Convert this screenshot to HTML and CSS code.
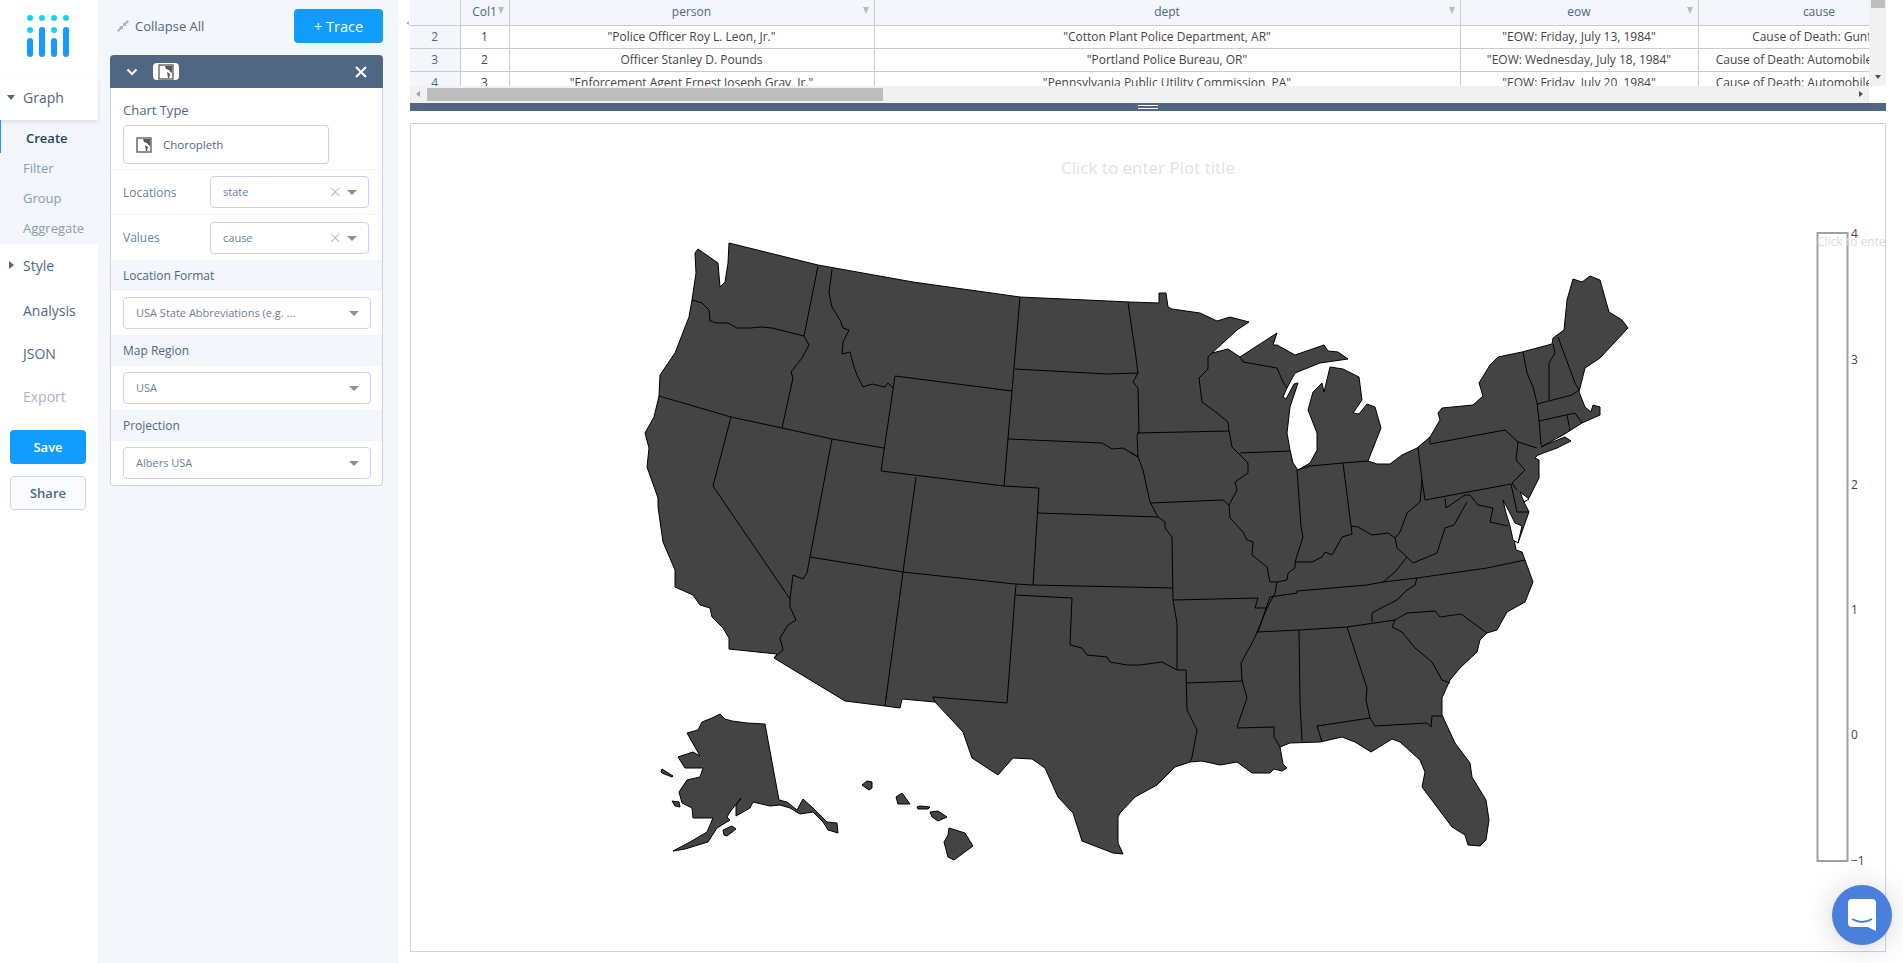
FILE: index.html
```html
<!DOCTYPE html>
<html lang="en">
<head>
  <meta charset="UTF-8">
  <title>Chart Studio</title>
  <link rel="stylesheet" href="styles.css">
</head>
<body>

<nav class="sidenav">
  <div class="logo">
    <svg width="50" height="50" viewBox="0 0 50 50">
      <g fill="#19d3f3">
        <circle cx="3" cy="3" r="3"/><circle cx="15" cy="3" r="3"/><circle cx="27" cy="3" r="3"/><circle cx="39" cy="3" r="3"/>
        <circle cx="3" cy="15" r="3"/><circle cx="27" cy="15" r="3"/>
      </g>
      <g fill="#119dff">
        <rect x="0" y="23" width="6" height="19" rx="3"/><rect x="12" y="12" width="6" height="30" rx="3"/>
        <rect x="24" y="23" width="6" height="19" rx="3"/><rect x="36" y="12" width="6" height="30" rx="3"/>
      </g>
    </svg>
  </div>
  <div class="nav-head"><span class="caret-down"></span>Graph</div>
  <div class="nav-sub">
    <div class="nav-item active">Create</div>
    <div class="nav-item">Filter</div>
    <div class="nav-item">Group</div>
    <div class="nav-item">Aggregate</div>
  </div>
  <div class="nav-head style-head"><span class="caret-right"></span>Style</div>
  <div class="nav-link">Analysis</div>
  <div class="nav-link">JSON</div>
  <div class="nav-link disabled">Export</div>
  <button class="btn-save">Save</button>
  <button class="btn-share">Share</button>
</nav>

<aside class="panel">
  <div class="panel-top">
    <div class="collapse-all">
      <svg width="12" height="12" viewBox="0 0 12 12" fill="#a9b4c4">
        <path d="M0 10.500 L3.500 7 L2 6 L6 6 L6 10 L5 8.500 L1.500 12 Z"/>
        <path d="M12 1.500 L8.500 5 L10 6 L6 6 L6 2 L7 3.500 L10.500 0 Z"/>
      </svg>
      Collapse All
    </div>
    <button class="btn-trace">+ Trace</button>
  </div>

  <div class="card">
    <div class="card-head">
      <svg class="chev" width="12" height="8" viewBox="0 0 12 8"><path d="M1.500 1.500 L6 6 L10.500 1.500" fill="none" stroke="#fff" stroke-width="2"/></svg>
      <span class="trace-icon">
        <svg width="16" height="16" viewBox="0 0 16 16"><use href="#choro"/></svg>
      </span>
      <svg class="close" width="12" height="12" viewBox="0 0 12 12"><path d="M1 1 L11 11 M11 1 L1 11" stroke="#fff" stroke-width="2"/></svg>
    </div>

    <div class="chart-type">
      <div class="field-label">Chart Type</div>
      <div class="type-box">
        <svg width="16" height="16" viewBox="0 0 16 16">
          <symbol id="choro" viewBox="0 0 16 16">
            <rect x="1" y="1" width="14" height="14" fill="#fff" stroke="#6b6b6b" stroke-width="1.500"/>
            <path d="M7 2 H14 V9 L12.500 8 L11 6 L8 5 Z M9 8 L12 10 L11 14 H10 Z" fill="#555"/>
          </symbol>
          <use href="#choro"/>
        </svg>
        Choropleth
      </div>
    </div>

    <div class="row">
      <span class="row-label">Locations</span>
      <div class="select narrow">state<span class="clear">&times;</span><span class="arrow"></span></div>
    </div>
    <div class="row">
      <span class="row-label">Values</span>
      <div class="select narrow">cause<span class="clear">&times;</span><span class="arrow"></span></div>
    </div>

    <div class="section-label">Location Format</div>
    <div class="section-body">
      <div class="select">USA State Abbreviations (e.g. ...<span class="arrow"></span></div>
    </div>
    <div class="section-label">Map Region</div>
    <div class="section-body">
      <div class="select">USA<span class="arrow"></span></div>
    </div>
    <div class="section-label">Projection</div>
    <div class="section-body">
      <div class="select">Albers USA<span class="arrow"></span></div>
    </div>
  </div>
</aside>

<main class="main">
  <span class="panel-toggle"></span>
  <div class="grid-wrap">
    <div class="grid-view">
      <table class="grid">
        <colgroup>
          <col class="c-num"><col class="c-id"><col class="c-person"><col class="c-dept"><col class="c-eow"><col class="c-cause">
        </colgroup>
        <thead>
          <tr>
            <th></th>
            <th>Col1<i class="filter"></i></th>
            <th>person<i class="filter"></i></th>
            <th>dept<i class="filter"></i></th>
            <th>eow<i class="filter"></i></th>
            <th>cause<i class="filter"></i></th>
          </tr>
        </thead>
        <tbody>
          <tr><th>2</th><td>1</td><td>"Police Officer Roy L. Leon, Jr."</td><td>"Cotton Plant Police Department, AR"</td><td>"EOW: Friday, July 13, 1984"</td><td>Cause of Death: Gunfire</td></tr>
          <tr><th>3</th><td>2</td><td>Officer Stanley D. Pounds</td><td>"Portland Police Bureau, OR"</td><td>"EOW: Wednesday, July 18, 1984"</td><td>Cause of Death: Automobile accident</td></tr>
          <tr><th>4</th><td>3</td><td>"Enforcement Agent Ernest Joseph Gray, Jr."</td><td>"Pennsylvania Public Utility Commission, PA"</td><td>"EOW: Friday, July 20, 1984"</td><td>Cause of Death: Automobile accident</td></tr>
        </tbody>
      </table>
    </div>
    <div class="vbar"><span class="vthumb"></span><span class="vdown"></span></div>
    <div class="hbar"><span class="hleft"></span><span class="hthumb"></span><span class="hright"></span></div>
  </div>
  <div class="resizer"><span class="grip"></span></div>

  <div class="plot">
    <svg class="plot-svg" viewBox="410 123 1476 829" width="1476" height="829">
      <text class="plot-title" x="1148" y="174">Click to enter Plot title</text>

      <g class="states">
        <!-- lower 48 silhouette -->
        <path d="M698 249 L695 253 L696 273 L692 300 L689 317 L675 353 L660 375 L659 396 L654 417 L645 433 L649 448 L647 467 L658 498 L658 507 L663 542 L675 570 L675 587 L693 595 L700 605 L710 608 L712 617 L723 628 L729 638 L729 649 L777 654 L774 658 L845 701 L885 706 L900 708 L902 699 L935 702 L950 718 L963 732 L972 758 L998 775 L1013 758 L1032 759 L1045 768 L1058 797 L1073 813 L1082 841 L1113 853 L1123 854 L1118 843 L1118 817 L1120 813 L1135 797 L1157 785 L1175 767 L1190 762 L1202 761 L1220 765 L1237 762 L1252 773 L1270 773 L1274 769 L1282 771 L1287 768 L1283 764 L1280 747 L1290 743 L1320 742 L1342 737 L1355 742 L1371 752 L1392 739 L1400 742 L1420 760 L1425 772 L1422 787 L1452 827 L1465 835 L1468 845 L1480 846 L1486 840 L1489 820 L1486 800 L1472 777 L1470 763 L1455 743 L1442 715 L1442 698 L1450 680 L1460 668 L1477 652 L1480 640 L1487 633 L1497 630 L1507 612 L1525 602 L1533 582 L1525 560 L1522 552 L1516 550 L1512 527 L1518 543 L1525 523 L1529 512 L1524 502 L1529 498 L1539 478 L1539 460 L1535 458 L1538 455 L1557 448 L1571 441 L1565 437 L1550 443 L1541 447 L1563 435 L1582 423 L1600 415 L1600 407 L1593 405 L1591 412 L1585 407 L1579 392 L1585 368 L1600 358 L1628 328 L1622 320 L1609 312 L1600 280 L1590 276 L1582 282 L1573 279 L1567 300 L1564 330 L1553 338 L1552 344 L1522 352 L1498 357 L1490 365 L1479 383 L1483 396 L1473 405 L1442 408 L1438 413 L1440 420 L1430 437 L1417 448 L1402 455 L1390 464 L1377 464 L1368 461 L1381 428 L1375 407 L1367 404 L1359 414 L1353 413 L1362 400 L1359 377 L1343 369 L1330 367 L1324 392 L1322 383 L1313 392 L1308 410 L1317 433 L1317 450 L1310 463 L1298 470 L1293 463 L1290 450 L1287 433 L1290 407 L1298 383 L1294 384 L1286 399 L1283 397 L1287 388 L1295 373 L1320 363 L1348 359 L1338 352 L1328 351 L1324 345 L1295 355 L1277 345 L1273 345 L1277 333 L1240 357 L1228 349 L1212 353 L1237 330 L1249 322 L1230 317 L1217 321 L1200 313 L1172 309 L1168 307 L1166 293 L1159 293 L1159 303 L1130 302 L1020 297 L913 282 L818 265 L729 243 L728 263 L725 282 L720 287 L718 263 Z"/>
        <!-- bays that cut into the coast -->
        <path class="water" d="M1503 500 L1506 513 L1510 526 L1513 540 L1518 543 L1522 526 L1515 523 L1510 513 Z M1520 492 L1529 499 L1524 502 Z"/>
        <!-- Alaska and islands -->
        <path d="M720 714 L725 719 L732 721 L747 723 L765 724 L779 800 L787 802 L797 810 L803 799 L813 808 L827 822 L837 823 L838 833 L828 830 L823 822 L813 812 L800 814 L790 808 L780 805 L770 806 L753 802 L750 808 L736 816 L736 805 L741 798 L730 812 L727 817 L730 820 L717 828 L708 842 L698 845 L685 849 L673 851 L690 842 L707 832 L713 818 L693 818 L692 808 L682 803 L679 792 L687 780 L700 777 L703 768 L685 768 L678 757 L693 752 L700 756 L687 733 L698 730 L702 722 L712 718 Z"/>
        <path d="M672 801 L679 802 L680 807 L675 806 Z"/>
        <path d="M661 772 L662 769 L673 776 L672 777 L662 773 Z"/>
        <path d="M723 830 L732 826 L736 829 L727 836 L724 835 Z"/>
        <path d="M862 785 L867 781 L872 782 L872 788 L869 790 Z"/>
        <path d="M896 797 L902 793 L910 804 L898 804 Z"/>
        <path d="M917 807 L920 806 L930 807 L928 809 L918 809 Z"/>
        <path d="M930 812 L938 811 L947 817 L938 821 L932 817 Z"/>
        <path d="M949 828 L965 833 L973 846 L954 860 L948 857 L944 842 L948 835 Z"/>
      </g>

      <path class="borders" d="
        M692 300 L702 303 L709 310 L710 321 L717 323 L728 323 L737 328 L750 328 L761 327 L772 328 L804 336
        M818 266 L804 336 L809 345 L802 358 L791 372 L793 378 L782 428
        M659 396 L731 417 L782 428 L832 439 L884 448
        M832 269 L829 293 L832 307 L840 320 L843 328 L849 330 L843 342 L842 354 L850 352 L854 367 L857 375 L863 387 L872 384 L885 387 L888 383 L893 388
        M895 376 L1012 391 L1004 486 L881 471 Z
        M1020 297 L1012 391
        M1015 369 L1107 374 L1138 373
        M1008 439 L1102 443 L1112 449 L1123 448 L1138 457
        M916 477 L903 572
        M1004 486 L1039 488 L1033 585
        M810 557 L903 572 L1015 584 L1033 585 L1173 588
        M1038 513 L1158 517
        M731 417 L713 486 L790 599
        M832 439 L810 557 L807 573 L803 579 L793 575 L790 599 L790 607 L796 620 L788 625 L780 638 L783 650 L774 658
        M903 572 L885 706
        M1016 585 L1015 595 L1007 703 L933 697 L935 702
        M1015 595 L1072 598 L1070 645 L1082 648 L1087 655 L1107 657 L1110 662 L1127 665 L1140 665 L1162 662 L1177 670 L1186 670 L1187 710 L1197 730 L1192 757 L1190 762
        M1158 517 L1165 522 L1165 528 L1172 537 L1173 600 L1177 623 L1177 670
        M1173 600 L1258 598 L1255 608 L1267 608
        M1130 452 L1138 457 L1143 470 L1150 502 L1158 517
        M1128 303 L1135 350 L1138 373 L1133 382 L1138 388 L1139 433 L1137 435 L1138 457
        M1137 433 L1229 431
        M1212 353 L1208 357 L1208 369 L1199 378 L1202 402 L1217 413 L1228 422 L1229 431 L1232 447 L1248 463 L1248 473 L1235 482 L1237 490 L1229 505
        M1150 503 L1223 500 L1229 505 L1230 518 L1243 532 L1247 540 L1253 542 L1252 555 L1267 567 L1270 582 L1277 582 L1275 593 L1267 608 L1258 630 L1255 637 L1252 643 L1241 663 L1242 680 L1247 698 L1237 727
        M1186 683 L1243 681
        M1237 728 L1274 727 L1274 737 L1280 747
        M1299 630 L1300 703 L1302 741
        M1347 627 L1367 688 L1366 700 L1370 718
        M1317 726 L1370 718 L1375 726 L1427 723 L1431 727 L1432 716 L1442 716
        M1317 726 L1322 742
        M1395 620 L1392 627 L1402 632 L1415 648 L1432 662 L1442 680 L1450 683
        M1395 620 L1407 613 L1435 611 L1440 617 L1461 614 L1487 633
        M1257 632 L1299 630 L1347 627 L1395 620
        M1372 622 L1372 613 L1383 607 L1397 600 L1407 590 L1415 585 L1417 578
        M1270 597 L1297 593 L1297 591 L1367 585 L1383 582 L1417 578 L1487 568 L1525 560
        M1270 597 L1258 632
        M1277 582 L1287 580 L1288 573 L1295 568 L1295 562 L1312 562 L1322 557 L1325 552 L1332 555 L1342 537 L1352 534 L1351 526 L1358 527 L1372 535 L1388 533 L1395 538 L1397 548 L1407 557 L1395 572 L1383 582
        M1297 470 L1301 527 L1303 537 L1295 562
        M1240 453 L1290 451
        M1297 470 L1310 466 L1343 463 L1368 461
        M1343 463 L1351 526
        M1418 448 L1422 480 L1420 502 L1407 513 L1400 532 L1395 538
        M1407 557 L1413 563 L1437 553 L1445 528 L1454 525 L1467 502
        M1422 480 L1425 500 L1511 484
        M1445 498 L1446 508 L1465 495 L1470 495 L1478 505 L1493 508 L1490 522 L1508 526
        M1430 437 L1430 444 L1505 430 L1518 442 L1537 448
        M1518 442 L1516 460 L1525 470 L1512 483 L1517 490
        M1511 484 L1517 512 L1529 512
        M1523 352 L1527 373 L1533 387 L1537 403 L1539 420 L1541 445
        M1553 344 L1555 353 L1549 363 L1549 400
        M1558 337 L1575 383 L1579 390
        M1537 404 L1572 395 L1579 390
        M1539 421 L1575 413 L1582 423
        M1567 415 L1570 430
        M1240 357 L1243 362 L1277 368 L1283 382 L1287 388
      "/>

      <rect class="cbar" x="1817.500" y="233" width="30" height="628"/>
      <text class="cbar-title" x="1817" y="246">Click to enter Colorbar title</text>
      <g class="ticks">
        <text x="1851" y="238">4</text>
        <text x="1851" y="364">3</text>
        <text x="1851" y="489">2</text>
        <text x="1851" y="614">1</text>
        <text x="1851" y="739">0</text>
        <text x="1851" y="865">&#8722;1</text>
      </g>
    </svg>
  </div>
</main>

<button class="chat" aria-label="Chat">
  <svg width="28" height="32" viewBox="0 0 28 32">
    <path d="M4 0 H24 A4 4 0 0 1 28 4 V32 L20 28 H4 A4 4 0 0 1 0 24 V4 A4 4 0 0 1 4 0 Z" fill="#fff"/>
    <path d="M4 20 Q14 26 24 20" fill="none" stroke="#4a7fdc" stroke-width="2"/>
  </svg>
</button>

</body>
</html>
```

FILE: styles.css
```css
* {
  box-sizing: border-box;
}
html, body {
  height: 100%;
}
body {
  margin: 0;
  display: flex;
  height: 963px;
  overflow: hidden;
  background: #fff;
  font-family: "Open Sans", sans-serif;
  color: #506784;
}
button {
  font-family: inherit;
  cursor: pointer;
}

/* left nav */
.sidenav {
  width: 98px;
  flex: none;
  background: #fff;
}
.logo {
  height: 79px;
  padding: 15px 0 0 27px;
}
.nav-head {
  height: 41px;
  display: flex;
  align-items: center;
  padding: 0 0 4px 7px;
  font-size: 14px;
  color: #506784;
  box-shadow: 0 2px 4px rgba(80, 103, 132, 0.15);
  position: relative;
}
.caret-down {
  width: 0;
  height: 0;
  margin-right: 8px;
  border: 4px solid transparent;
  border-top: 5px solid #506784;
  border-bottom: 0;
}
.caret-right {
  width: 0;
  height: 0;
  margin-left: 2px;
  margin-right: 9px;
  border: 4px solid transparent;
  border-left: 5px solid #506784;
  border-right: 0;
}
.nav-sub {
  height: 124px;
  background: #f3f6fa;
}
.nav-item {
  height: 30px;
  line-height: 30px;
  padding-left: 23px;
  font-size: 13px;
  color: #8c9cb1;
}
.nav-item.active {
  height: 33px;
  line-height: 37px;
  padding-left: 25px;
  font-weight: 600;
  color: #2a3f5f;
  border-left: 1px solid #119dff;
}
.style-head {
  box-shadow: none;
  height: 44px;
  padding-bottom: 2px;
}
.nav-link {
  height: 43px;
  line-height: 43px;
  padding-left: 23px;
  font-size: 14px;
  color: #506784;
  position: relative;
  top: 1px;
}
.nav-link.disabled {
  color: #a9b4c4;
}
.btn-save, .btn-share {
  display: block;
  width: 76px;
  margin-left: 10px;
  border-radius: 4px;
  font-size: 13px;
  font-weight: 600;
}
.btn-save {
  height: 34px;
  margin-top: 13px;
  border: none;
  background: #119dff;
  color: #fff;
}
.btn-share {
  height: 34px;
  margin-top: 12px;
  border: 1px solid #c8d4e3;
  background: #fafbfd;
  color: #506784;
}

/* trace panel */
.panel {
  width: 300px;
  flex: none;
  padding: 9px 15px 0 12px;
  background: #f3f6fa;
}
.panel-top {
  display: flex;
  justify-content: space-between;
  align-items: center;
  height: 34px;
  margin-bottom: 12px;
}
.collapse-all {
  display: flex;
  align-items: center;
  gap: 6px;
  padding-left: 7px;
  font-size: 13px;
  color: #506784;
}
.btn-trace {
  width: 89px;
  height: 34px;
  border: none;
  border-radius: 4px;
  background: #119dff;
  color: #fff;
  font-size: 14.500px;
  font-weight: 500;
}
.card {
  height: 431px;
  background: #fff;
  border: 1px solid #c8d4e3;
  border-top: none;
  border-radius: 4px;
}
.card-head {
  display: flex;
  align-items: center;
  height: 33px;
  margin: 0 -1px;
  padding: 0 16px 0 16px;
  background: #506784;
  border-radius: 4px 4px 0 0;
}
.trace-icon {
  display: flex;
  align-items: center;
  justify-content: center;
  width: 26px;
  height: 17px;
  margin-left: 15px;
  background: #fff;
  border-radius: 4px;
}
.close {
  margin-left: auto;
}
.chart-type {
  height: 82px;
  padding: 13px 12px 0;
  border-bottom: 1px solid #f3f6fa;
}
.field-label {
  height: 24px;
  font-size: 13px;
  line-height: 18px;
  color: #506784;
}
.type-box {
  display: flex;
  align-items: center;
  gap: 11px;
  width: 206px;
  height: 39px;
  padding-left: 12px;
  border: 1px solid #c8d4e3;
  border-radius: 4px;
  font-size: 11.500px;
  color: #506784;
}
.row {
  display: flex;
  align-items: center;
  justify-content: space-between;
  height: 45px;
  padding: 0 13px 0 12px;
  border-bottom: 1px solid #f3f6fa;
}
.row + .row {
  border-bottom: none;
}
.row-label {
  font-size: 12px;
  color: #6d7f97;
}
.select {
  position: relative;
  height: 32px;
  line-height: 30px;
  padding-left: 12px;
  border: 1px solid #c8d4e3;
  border-radius: 4px;
  font-size: 11px;
  color: #6d7f97;
  background: #fff;
}
.select.narrow {
  width: 159px;
}
.clear {
  position: absolute;
  right: 27px;
  top: 0;
  font-size: 20px;
  font-weight: 300;
  color: #a9b4c4;
}
.arrow {
  position: absolute;
  right: 11px;
  top: 13px;
  width: 0;
  height: 0;
  border: 5px solid transparent;
  border-top: 5px solid #8f8f8f;
  border-bottom: 0;
}
.section-label {
  height: 31px;
  line-height: 31px;
  padding-left: 12px;
  background: #f3f6fa;
  font-size: 12px;
  color: #506784;
}
.section-body {
  height: 44px;
  padding: 6px 11px 0 12px;
}
.section-body:last-child {
  height: 39px;
}

/* grid */
.main {
  position: relative;
  flex: 1;
  min-width: 0;
  padding: 0 17px 0 12px;
}
.panel-toggle {
  position: absolute;
  left: 8px;
  top: 21px;
  width: 0;
  height: 0;
  border: 2px solid transparent;
  border-right: 3px solid #a9b4c4;
  border-left: 0;
}
.grid-wrap {
  position: relative;
  height: 103px;
}
.grid-view {
  width: 1459px;
  height: 86px;
  overflow: hidden;
}
.grid {
  width: 1530px;
  table-layout: fixed;
  border-collapse: collapse;
  font-size: 12px;
}
.c-num { width: 50px; }
.c-id { width: 49px; }
.c-person { width: 365px; }
.c-dept { width: 586px; }
.c-eow { width: 238px; }
.c-cause { width: 242px; }
.grid th, .grid td {
  height: 23px;
  padding: 0 4px;
  border: 1px solid #ccc;
  text-align: center;
  font-weight: 400;
  white-space: nowrap;
  overflow: hidden;
}
.grid thead th {
  position: relative;
  height: 25px;
  padding-bottom: 2px;
  background: #f3f6fa;
  border-top: none;
  color: #506784;
}
.grid tbody th {
  background: #f3f6fa;
  color: #506784;
}
.grid td {
  color: #444;
}
.grid tr > :first-child {
  border-left: none;
}
.filter {
  position: absolute;
  right: 5px;
  top: 7px;
  width: 0;
  height: 0;
  border: 3px solid transparent;
  border-top: 7px solid #bbb;
  border-bottom: 0;
}
.vbar {
  position: absolute;
  right: 0;
  top: 0;
  width: 17px;
  height: 86px;
  background: #f1f1f1;
}
.vthumb {
  position: absolute;
  left: 2px;
  top: 0;
  width: 14px;
  height: 8px;
  background: #bdbdbd;
}
.vdown {
  position: absolute;
  left: 6px;
  top: 75px;
  width: 0;
  height: 0;
  border: 3px solid transparent;
  border-top: 4px solid #505050;
  border-bottom: 0;
}
.hbar {
  position: absolute;
  left: 0;
  top: 86px;
  width: 1459px;
  height: 17px;
  background: #f1f1f1;
}
.hthumb {
  position: absolute;
  left: 17px;
  top: 2px;
  width: 456px;
  height: 13px;
  background: #bdbdbd;
}
.hleft, .hright {
  position: absolute;
  top: 5px;
  width: 0;
  height: 0;
  border: 3px solid transparent;
}
.hleft {
  left: 6px;
  border-right: 4px solid #a3a3a3;
  border-left: 0;
}
.hright {
  right: 6px;
  border-left: 4px solid #505050;
  border-right: 0;
}
.resizer {
  display: flex;
  justify-content: center;
  align-items: center;
  height: 8px;
  background: #506784;
}
.grip {
  width: 20px;
  height: 4px;
  border-top: 1px solid #fff;
  border-bottom: 1px solid #fff;
}

/* plot */
.plot {
  width: 1476px;
  height: 829px;
  margin-top: 12px;
  border: 1px solid #c8d4e3;
  overflow: hidden;
}
.plot-svg {
  display: block;
  margin: -1px;
}
.plot-title {
  text-anchor: middle;
  font-size: 17px;
  fill: #dfe3e8;
}
.states path {
  fill: #444;
  stroke: #000;
  stroke-width: 1;
  stroke-linejoin: round;
}
.states path.water {
  fill: #fff;
}
.borders {
  fill: none;
  stroke: #000;
  stroke-width: 1;
  stroke-linejoin: round;
}
.cbar {
  fill: #fff;
  stroke: #a0a0a0;
  stroke-width: 2;
}
.cbar-title {
  font-size: 12px;
  fill: #dcdcdc;
}
.ticks text {
  font-size: 12px;
  fill: #444;
}

/* chat launcher */
.chat {
  position: fixed;
  left: 1832px;
  top: 885px;
  display: flex;
  align-items: center;
  justify-content: center;
  width: 60px;
  height: 60px;
  padding: 0;
  border: none;
  border-radius: 50%;
  background: #4a7fdc;
  box-shadow: 0 1px 6px rgba(0, 0, 0, 0.06), 0 2px 32px rgba(0, 0, 0, 0.16);
}
```
